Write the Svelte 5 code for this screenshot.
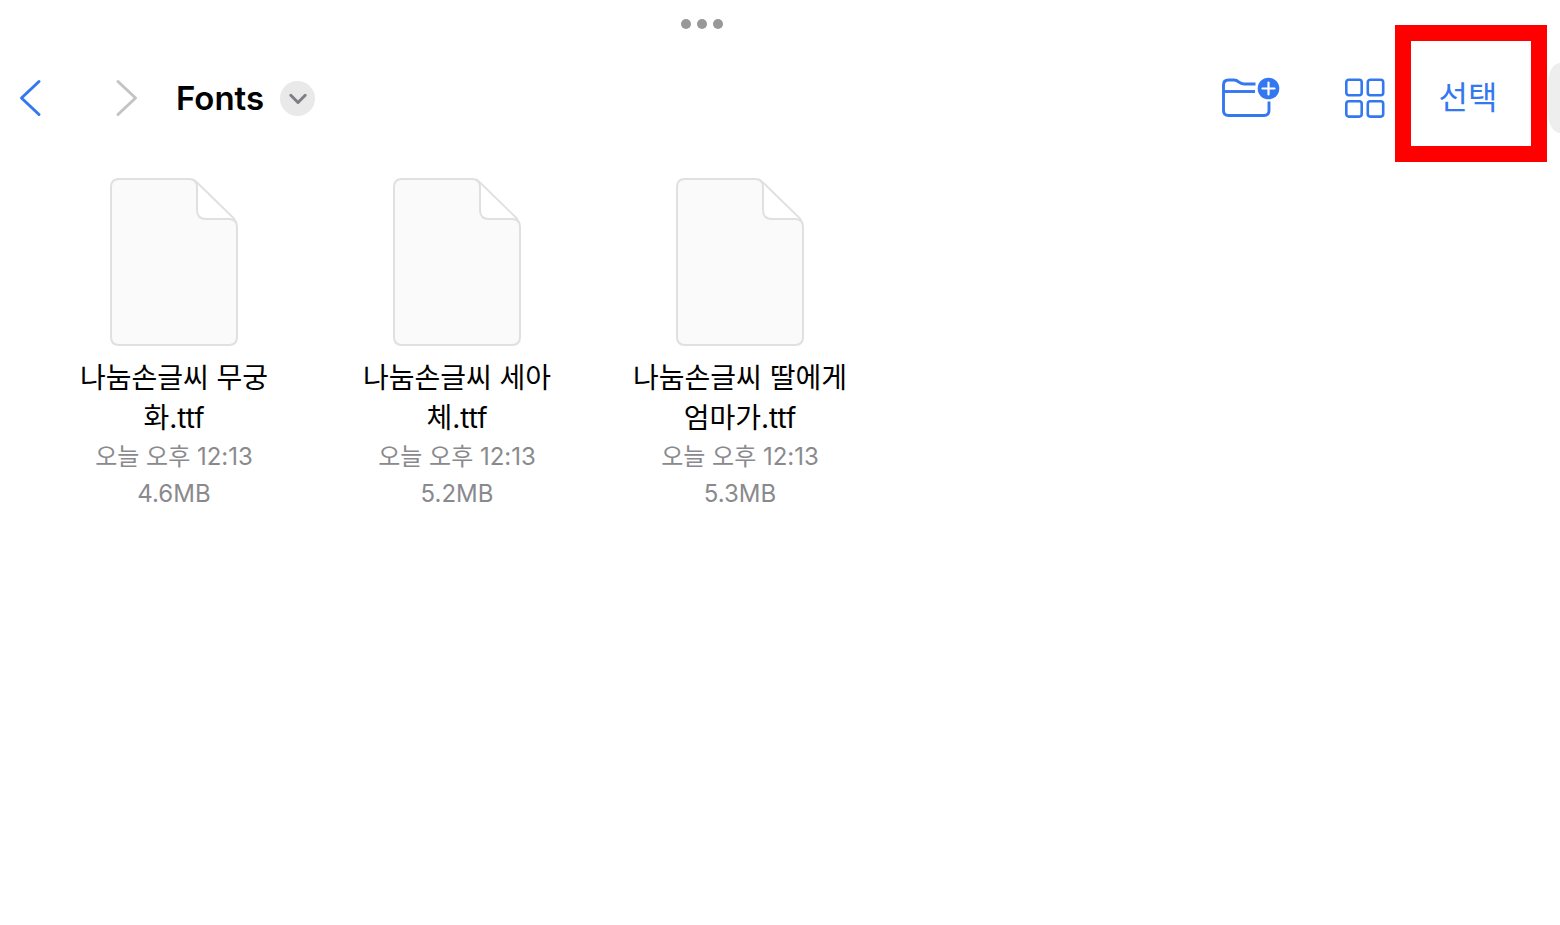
<script>
  const files = [
    { name: '나눔손글씨 무궁화.ttf', date: '오늘 오후 12:13', size: '4.6MB' },
    { name: '나눔손글씨 세아체.ttf', date: '오늘 오후 12:13', size: '5.2MB' },
    { name: '나눔손글씨 딸에게 엄마가.ttf', date: '오늘 오후 12:13', size: '5.3MB' }
  ];
</script>

<div class="window">
  <div class="grabber">
    <button class="dots" aria-label="멀티태스킹">
      <span></span><span></span><span></span>
    </button>
  </div>

  <header class="toolbar">
    <nav class="history">
      <button aria-label="뒤로">
        <svg width="24" height="40" viewBox="0 0 24 40"><path d="M21 3.500 3.500 20 21 36.500" stroke="#3478f0" /></svg>
      </button>
      <button aria-label="앞으로" disabled>
        <svg width="24" height="40" viewBox="0 0 24 40"><path d="M3 3.500 20.500 20 3 36.500" stroke="#c4c4c6" /></svg>
      </button>
    </nav>

    <h1>Fonts</h1>
    <button class="more" aria-label="폴더 메뉴">
      <svg width="20" height="14" viewBox="0 0 20 14"><path d="M2.800 4.300 10 11.500 17.200 4.300" stroke="#7f7f83" stroke-width="3" /></svg>
    </button>

    <div class="actions">
      <button aria-label="새로운 폴더">
        <svg width="60" height="44" viewBox="0 0 60 44">
          <g stroke="#3478f0" stroke-width="2.900">
            <path d="M35.500 8H24C21.500 8 20.500 7.500 19 6.200S16.500 4 14 4H8.500Q3.500 4 3.500 9V34.500Q3.500 39.500 8.500 39.500H44Q49 39.500 49 34.500V25.500" stroke-linecap="butt" />
            <path d="M3.500 15.500H35" stroke-linecap="butt" />
          </g>
          <circle cx="48.500" cy="12.500" r="10.800" fill="#3478f0" />
          <path d="M48.500 6.500V18.500M42.500 12.500H54.500" stroke="#fff" stroke-width="2.200" />
        </svg>
      </button>
      <button aria-label="보기 방식">
        <svg width="42" height="42" viewBox="0 0 42 42">
          <g stroke="#3478f0" stroke-width="2.600">
            <rect x="2.300" y="2.800" width="15.400" height="15.400" rx="2.500" />
            <rect x="23.800" y="2.800" width="15.400" height="15.400" rx="2.500" />
            <rect x="2.300" y="24.200" width="15.400" height="15.400" rx="2.500" />
            <rect x="23.800" y="24.200" width="15.400" height="15.400" rx="2.500" />
          </g>
        </svg>
      </button>
    </div>
    <button class="select">선택</button>
    <div class="search-edge"></div>
  </header>

  <main class="files">
    {#each files as file}
      <article class="file">
        <svg width="130" height="170" viewBox="0 0 130 170">
          <path d="M9 2H80Q88 2 88 10V33Q88 42 97 42H120Q128 42 128 50V160Q128 168 120 168H10Q2 168 2 160V10Q2 2 10 2Z" fill="#fafafa" stroke="#e0e0e0" stroke-width="2" />
          <path d="M85 3 88 5.500 125 41.500 127 45.500" stroke="#e0e0e0" stroke-width="1.800" />
        </svg>
        <h2>{file.name}</h2>
        <p>{file.date}</p>
        <p>{file.size}</p>
      </article>
    {/each}
  </main>
</div>

<style>
  :global(body) {
    margin: 0;
    background: #fff;
  }
  .window {
    min-height: 100vh;
    overflow: hidden;
    background: #fff;
    color: #000;
    font-family: Inter, 'Noto Sans CJK KR', sans-serif;
  }
  button {
    display: flex;
    align-items: center;
    justify-content: center;
    flex: none;
    margin: 0;
    padding: 0;
    border: 0;
    background: none;
    font: inherit;
  }
  svg {
    display: block;
    fill: none;
    stroke-width: 3;
    stroke-linecap: round;
    stroke-linejoin: round;
  }
  .grabber {
    display: flex;
    justify-content: center;
    height: 48px;
    padding-right: 156px;
  }
  .dots {
    gap: 6px;
  }
  .dots span {
    width: 10px;
    height: 10px;
    border-radius: 50%;
    background: #98989a;
  }
  .toolbar {
    display: flex;
    align-items: center;
    height: 100px;
    padding-left: 18px;
  }
  .history {
    display: flex;
    gap: 73px;
  }
  h1 {
    margin: 0 16px 0 37px;
    font-size: 33px;
    line-height: 40px;
    font-weight: 600;
  }
  .more {
    width: 35px;
    height: 35px;
    border-radius: 50%;
    background: #e9e9ea;
  }
  .actions {
    display: flex;
    align-items: center;
    gap: 64px;
    margin-left: auto;
    margin-right: 9px;
  }
  .select {
    box-sizing: border-box;
    width: 152px;
    height: 137px;
    margin-bottom: 9px;
    padding: 2px 6px 0 0;
    border: 16px solid #f00;
    background: #fff;
    color: #3478f0;
    font-size: 32px;
  }
  .search-edge {
    flex: none;
    width: 12px;
    height: 70px;
    margin-left: 1px;
    border-radius: 12px 0 0 12px / 20px 0 0 20px;
    background: #eeeeef;
  }
  .files {
    display: grid;
    grid-template-columns: repeat(auto-fill, 226px);
    gap: 57px;
    padding: 29px 61px;
  }
  .file {
    display: flex;
    flex-direction: column;
    align-items: center;
    text-align: center;
  }
  h2 {
    margin: 11px 0 0;
    font-size: 28px;
    line-height: 40px;
    font-weight: 400;
  }
  p {
    margin: 0;
    color: #8a8a8e;
    font-size: 24px;
    line-height: 37px;
  }
</style>
